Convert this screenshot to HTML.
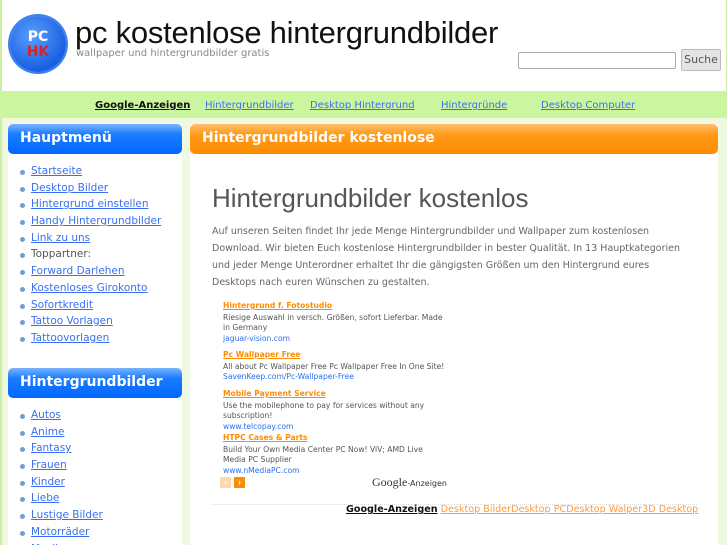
<!DOCTYPE html>
<html><head><meta charset="utf-8"><style>
*{margin:0;padding:0;box-sizing:border-box}
html{width:727px;height:545px;overflow:hidden}
body{width:727px;height:545px;overflow:hidden;background:#eef9e0;font-family:"DejaVu Sans",Verdana,sans-serif;position:relative}
a{color:#3a6ff0;text-decoration:underline}
#hd{position:absolute;left:0;top:0;width:727px;height:91px;background:#fff;border-left:2px solid #c9f0a0;border-right:1px solid #c9f0a0}
#logo{position:absolute;left:8px;top:16px;width:56px;height:56px;border-radius:50%;background:radial-gradient(circle at 40% 35%,#5aa0ff,#1a5fe0 70%);box-shadow:0 0 0 2px #3a80f0}
#logo span{position:absolute;left:0;width:56px;text-align:center;font:bold 14px "DejaVu Sans",sans-serif}
#title{position:absolute;left:73px;top:15px;font:31px "Liberation Sans",sans-serif;color:#111;letter-spacing:-0.25px}
#sub{position:absolute;left:74px;top:48px;font:10px "DejaVu Sans",sans-serif;color:#888}
#q{position:absolute;left:516px;top:52px;width:158px;height:17px;border:1px solid #aaa;border-radius:2px}
#btn{position:absolute;left:679px;top:49px;width:40px;height:22px;border:1px solid #bbb;border-radius:2px;background:#e4e4e4;font:11px "DejaVu Sans",sans-serif;color:#555;text-align:center;line-height:20px}
#nav{position:absolute;left:0;top:91px;width:727px;height:27px;background:#ccf5a0}
#nav a,#nav b{position:absolute;top:9px;font-size:10px}
#nav b{color:#111;text-decoration:underline}
.panel{position:absolute;background:#fff}
.bar{position:absolute;height:30px;border-radius:5px;color:#fff;font:bold 14px "DejaVu Sans",sans-serif;padding:6px 12px}
.blue{background:linear-gradient(#7ab4ff 0%,#1a7cff 35%,#0066ff 100%)}
.orange{background:linear-gradient(#ffc070 0%,#ff9a1a 35%,#ff8c00 100%)}
ul{list-style:none;position:absolute;left:19px;font-size:10.5px}
li{height:16.7px;padding-left:12px;position:relative;color:#555}
li:before{content:"";position:absolute;left:1px;top:5px;width:5px;height:5px;border-radius:50%;background:#6aa0d8}
h1{position:absolute;left:212px;top:183px;font:normal 26px "Liberation Sans",sans-serif;color:#555}
#p{position:absolute;left:212px;top:223px;width:474px;font-size:9.5px;line-height:17px;color:#666}
.ad{position:absolute;left:223px;font-size:7.6px;line-height:10.5px;color:#555;width:220px}
.ad b{color:#ff8c00;text-decoration:underline;display:block;font-size:7.6px;margin-bottom:1px}
.ad i{font-style:normal;color:#2a6ef0;display:block}
#ft{position:absolute;left:346px;top:504px;font-size:9.6px;white-space:nowrap}
#ft a{color:#ff9a40}
</style></head><body>
<div id="hd">
<div id="logo"><span style="top:13px;color:#fff">PC</span><span style="top:28px;color:#e02020">HK</span></div>
<div id="title">pc kostenlose hintergrundbilder</div>
<div id="sub">wallpaper und hintergrundbilder gratis</div>
<div id="q"></div><div id="btn">Suche</div>
</div>
<div id="nav">
<b style="left:95px">Google-Anzeigen</b>
<a style="left:205px">Hintergrundbilder</a>
<a style="left:310px">Desktop Hintergrund</a>
<a style="left:441px">Hintergründe</a>
<a style="left:541px">Desktop Computer</a>
</div>
<div style="position:absolute;left:0;top:118px;width:2px;height:427px;background:#c9f0a0"></div>
<div class="panel" style="left:8px;top:124px;width:174px;height:421px"></div>
<div class="panel" style="left:190px;top:124px;width:528px;height:421px"></div>
<div class="bar blue" style="left:8px;top:124px;width:174px">Hauptmenü</div>
<div class="bar orange" style="left:190px;top:124px;width:528px">Hintergrundbilder kostenlose</div>
<ul style="top:165px">
<li><a>Startseite</a></li><li><a>Desktop Bilder</a></li><li><a>Hintergrund einstellen</a></li><li><a>Handy Hintergrundbilder</a></li><li><a>Link zu uns</a></li><li>Toppartner:</li><li><a>Forward Darlehen</a></li><li><a>Kostenloses Girokonto</a></li><li><a>Sofortkredit</a></li><li><a>Tattoo Vorlagen</a></li><li><a>Tattoovorlagen</a></li>
</ul>
<div class="bar blue" style="left:8px;top:368px;width:174px;height:30px">Hintergrundbilder</div>
<ul style="top:409px">
<li><a>Autos</a></li><li><a>Anime</a></li><li><a>Fantasy</a></li><li><a>Frauen</a></li><li><a>Kinder</a></li><li><a>Liebe</a></li><li><a>Lustige Bilder</a></li><li><a>Motorräder</a></li><li><a>Musik</a></li>
</ul>
<h1>Hintergrundbilder kostenlos</h1>
<div id="p">Auf unseren Seiten findet Ihr jede Menge Hintergrundbilder und Wallpaper zum kostenlosen Download. Wir bieten Euch kostenlose Hintergrundbilder in bester Qualität. In 13 Hauptkategorien und jeder Menge Unterordner erhaltet Ihr die gängigsten Größen um den Hintergrund eures Desktops nach euren Wünschen zu gestalten.</div>
<div class="ad" style="top:301px"><b>Hintergrund f. Fotostudio</b>Riesige Auswahl in versch. Größen, sofort Lieferbar. Made in Germany<i>jaguar-vision.com</i></div>
<div class="ad" style="top:350px;width:240px"><b>Pc Wallpaper Free</b>All about Pc Wallpaper Free Pc Wallpaper Free In One Site!<i>SavenKeep.com/Pc-Wallpaper-Free</i></div>
<div class="ad" style="top:389px"><b>Mobile Payment Service</b>Use the mobilephone to pay for services without any subscription!<i>www.telcopay.com</i></div>
<div class="ad" style="top:433px;width:210px"><b>HTPC Cases &amp; Parts</b>Build Your Own Media Center PC Now! ViV; AMD Live Media PC Supplier<i>www.nMediaPC.com</i></div>
<div style="position:absolute;left:220px;top:477px;width:11px;height:11px;background:#ffd8b0;color:#fff;font:bold 9px sans-serif;text-align:center;line-height:11px">‹</div>
<div style="position:absolute;left:234px;top:477px;width:11px;height:11px;background:#ff8c00;color:#fff;font:bold 9px sans-serif;text-align:center;line-height:11px">›</div>
<div style="position:absolute;left:372px;top:475px;font:12px 'Liberation Serif',serif;color:#333">Google<span style="font:8px 'DejaVu Sans',sans-serif">-Anzeigen</span></div>
<div style="position:absolute;left:212px;top:504px;width:485px;border-top:1px dotted #ddd"></div>
<div id="ft"><b style="color:#111;text-decoration:underline">Google-Anzeigen</b> <a>Desktop Bilder</a><a>Desktop PC</a><a>Desktop Walper</a><a>3D Desktop</a></div>
</body></html>
